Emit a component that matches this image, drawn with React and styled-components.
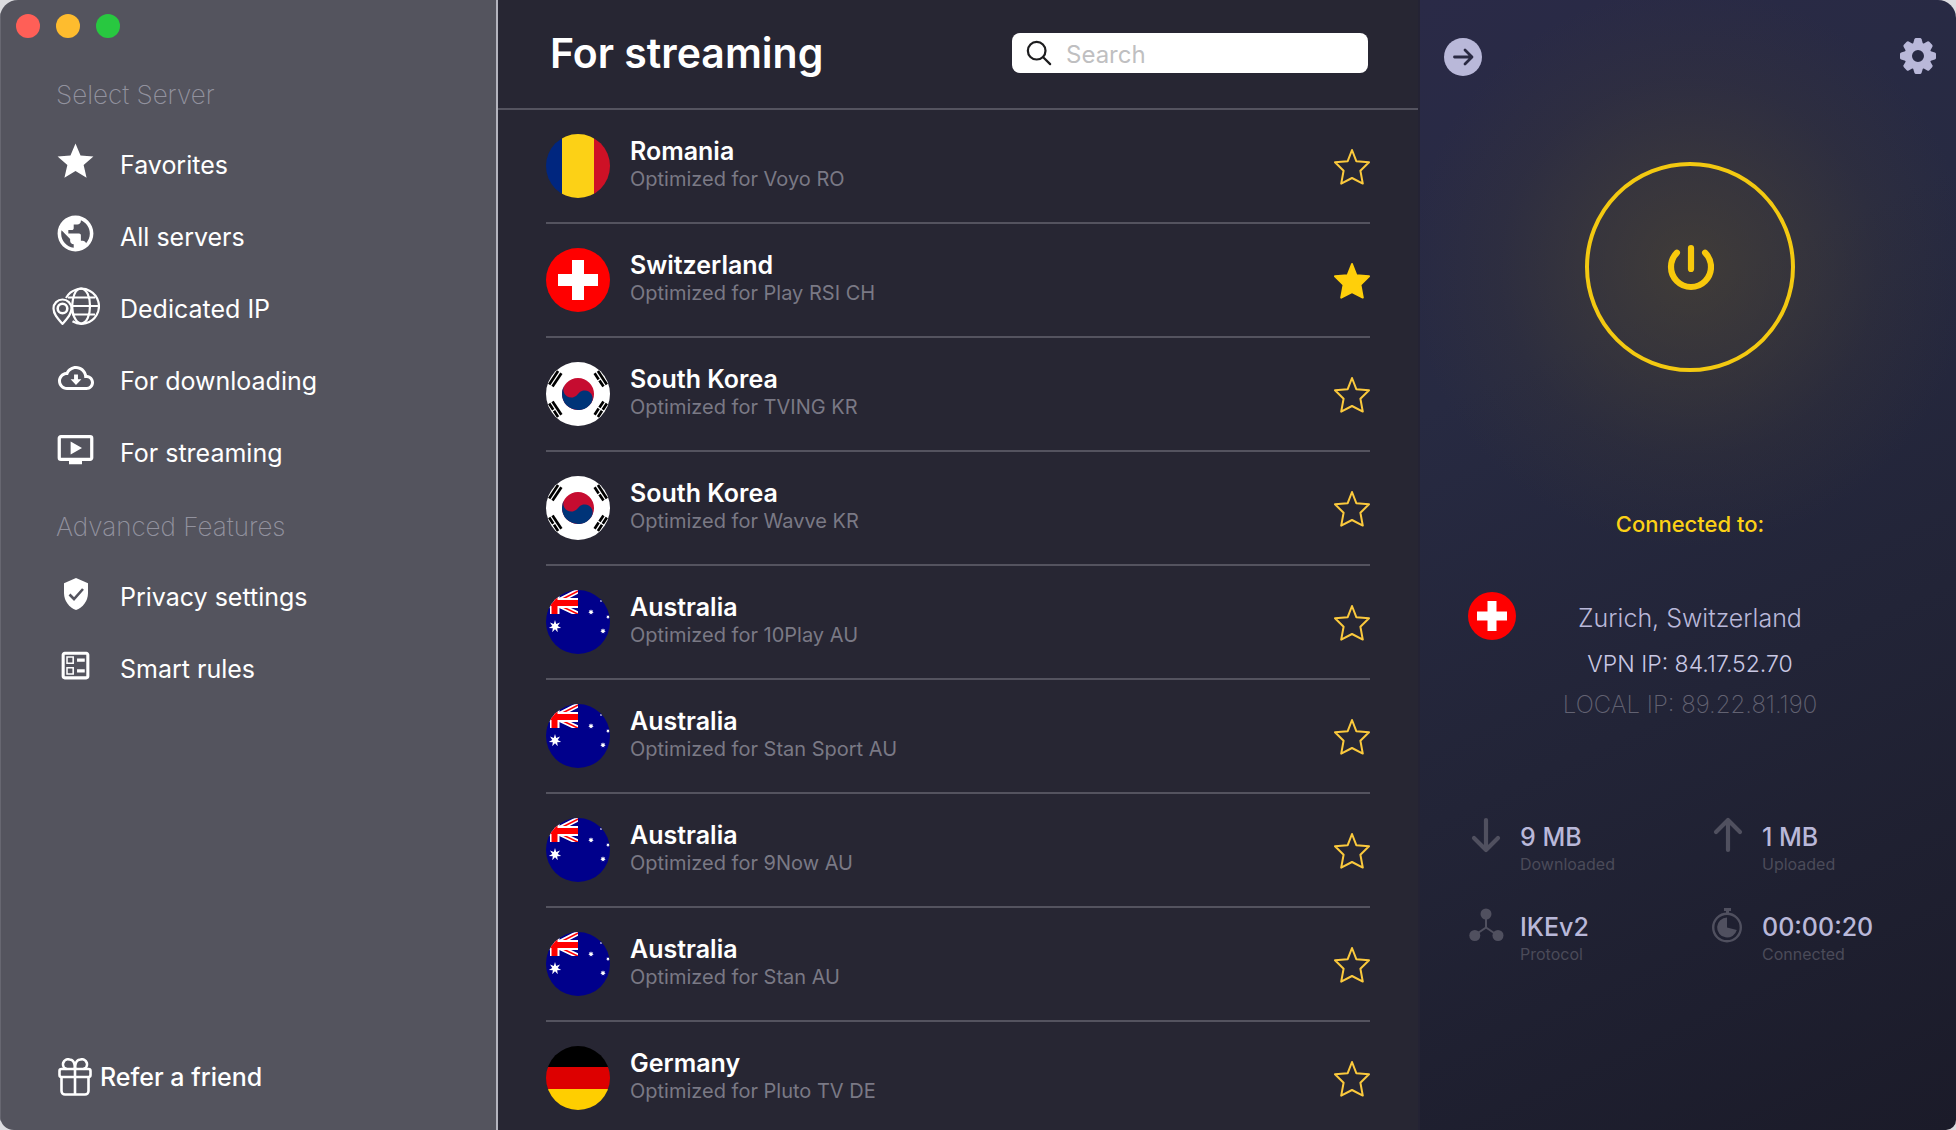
import React, { useState } from 'react';
import styled, { createGlobalStyle } from 'styled-components';
import {
  MdOndemandVideo,
  MdOutlineBallot,
  MdPublic,
  MdStar,
} from 'react-icons/md';

// START = ICONS
const ICDedicated = () => (
  <svg width="48" height="38" viewBox="0 0 48 38" fill="none" stroke="#fff" strokeWidth="2.200">
    <path d="M14 11a17.500 17.500 0 1 1 6.500 23.300" />
    <path d="M22 29.500C18.500 20 20.500 2 29 1.500C35 2 38 10 38 19S35 36 29 36.500C26.500 36.300 24 34 22 29.500" />
    <path d="M16 10.500h27M20.500 19h26M20 27.500h23" />
    <path d="M10.500 36.800C6 32 1.500 27.500 1.500 21.500a9 9 0 0 1 18 0C19.500 27.500 15 32 10.500 36.800z" />
    <circle cx="10.500" cy="21.500" r="4.800" strokeWidth="2.600" />
  </svg>
);

const ICCloud = () => (
  <svg width="36" height="36" viewBox="0 0 24 24" fill="#fff">
    <path d="M19.350 10.040C18.670 6.590 15.640 4 12 4 9.110 4 6.600 5.640 5.350 8.040 2.340 8.360 0 10.910 0 14c0 3.310 2.690 6 6 6h13c2.760 0 5-2.240 5-5 0-2.640-2.050-4.780-4.650-4.960zM19 18H6c-2.210 0-4-1.790-4-4s1.790-4 4-4h.71C7.370 7.690 9.480 6 12 6c3.040 0 5.500 2.460 5.500 5.500v.5H19c1.660 0 3 1.340 3 3s-1.340 3-3 3z" />
    <path d="M10.700 9.600h2.600v3.200h2.300L12 16.600l-3.600-3.800h2.300z" />
  </svg>
);

const ICShield = () => (
  <svg width="26" height="34" viewBox="0 0 26 34">
    <path d="M13 1L25 6.300V16c0 8-5.200 14.500-12 17C6.200 30.500 1 24 1 16V6.300z" fill="#fff" />
    <path d="M6.500 17.500l4.500 4.500L20 12" fill="none" stroke="#54545e" strokeWidth="2.600" />
  </svg>
);

const ICGift = () => (
  <svg width="34" height="38" viewBox="0 0 34 38" fill="none" stroke="#fff" strokeWidth="2.600">
    <rect x="1.500" y="11" width="31" height="8" rx="2" />
    <path d="M3.500 19v14a3.500 3.500 0 0 0 3.500 3.500h20a3.500 3.500 0 0 0 3.500-3.500V19M17 9v27" />
    <path d="M17 11C17 5 15 1.500 11.500 1.500a4.800 4.800 0 0 0-3 9.500M17 11C17 5 19 1.500 22.500 1.500a4.800 4.800 0 0 1 3 9.500" />
  </svg>
);

const ICSearch = () => (
  <svg width="26" height="26" viewBox="0 0 28 28" fill="none" stroke="#1d1d1f" strokeWidth="2.400" strokeLinecap="round">
    <circle cx="11.500" cy="11.500" r="9.500" />
    <path d="M18.500 18.500l7.500 7.500" />
  </svg>
);

const ICStar = ({ filled }) => (
  <svg width="36" height="38" viewBox="0 0 36 38">
    <path
      d="M18 2L22.300 13.200L35 14.300L26.400 22.800L28.800 35.600L18 30L7.200 35.600L9.600 22.800L1 14.300L13.700 13.200Z"
      fill={filled ? '#ffcf0a' : 'none'}
      stroke={filled ? '#ffcf0a' : '#fbc93d'}
      strokeWidth="2"
      strokeLinejoin="round"
    />
  </svg>
);

const ICForward = () => (
  <svg width="38" height="38" viewBox="0 0 38 38">
    <circle cx="19" cy="19" r="19" fill="#b9b8d9" />
    <path d="M10.500 19h17M21 12l7 7-7 7" fill="none" stroke="#2a2a43" strokeWidth="2.800" strokeLinecap="round" strokeLinejoin="round" />
  </svg>
);

const ICGear = () => (
  <svg width="36" height="36" viewBox="-18 -18 36 36" fill="#b9b8d9">
    <path d="M0-13.500a13.500 13.500 0 1 0 0 27a13.500 13.500 0 1 0 0-27zM0-6a6 6 0 1 1 0 12a6 6 0 1 1 0-12z" fillRule="evenodd" />
    {[0, 45, 90, 135, 180, 225, 270, 315].map((angle) => (
      <path key={angle} d="M-5-12L-3.600-16.800Q-3.200-18-2-18H2Q3.200-18 3.600-16.800L5-12z" transform={`rotate(${angle})`} />
    ))}
  </svg>
);

const ICPower = () => (
  <svg width="48" height="48" viewBox="0 0 48 48" fill="none" stroke="#f8c90c" strokeWidth="6.200" strokeLinecap="round">
    <path d="M10.900 9.800a20 20 0 1 0 28.200 0" />
    <path d="M25 5v21" />
  </svg>
);

const ICArrow = ({ up }) => (
  <svg width="36" height="36" viewBox="0 0 36 36" fill="none" stroke="#50505f" strokeWidth="4.200" strokeLinecap="round" strokeLinejoin="round">
    <path d={up ? 'M18 33V3M6 15L18 3l12 12' : 'M18 3v30M6 21l12 12 12-12'} />
  </svg>
);

const ICNetwork = () => (
  <svg width="36" height="36" viewBox="0 0 36 36" fill="#50505f">
    <path d="M18 7v13.500L7 28M18 20.500L29 28" fill="none" stroke="#50505f" strokeWidth="2" />
    <circle cx="18" cy="7" r="5.500" />
    <circle cx="6.800" cy="28.500" r="5.500" />
    <circle cx="30" cy="28.500" r="5.500" />
  </svg>
);

const ICTimer = () => (
  <svg width="36" height="36" viewBox="0 0 36 36" fill="#50505f">
    <circle cx="17" cy="20.500" r="13.800" fill="none" stroke="#50505f" strokeWidth="2.400" />
    <path d="M17 20.500V10.500A10 10 0 1 0 26.800 23z" />
    <path d="M14 1h7v3h-2v3h-3V4h-2z" />
  </svg>
);
// END = ICONS

// START = FLAGS
const starPoints = (cx, cy, outer, inner, tips) => {
  const points = [];
  for (let i = 0; i < tips * 2; i += 1) {
    const r = i % 2 === 0 ? outer : inner;
    const a = (Math.PI * i) / tips - Math.PI / 2;
    points.push(`${(cx + r * Math.cos(a)).toFixed(2)},${(cy + r * Math.sin(a)).toFixed(2)}`);
  }
  return points.join(' ');
};

// three bars of a trigram, "1" is a whole bar and "0" a broken one
const Trigram = ({ bars, angle, side }) => (
  <g transform={`rotate(${angle} 32 32) translate(32 32)`}>
    {bars.split('').map((bar, i) => {
      const x = side * (25.3 + i * 4);
      return (
        <path
          key={x}
          d={bar === '1' ? `M${x} -8V8` : `M${x} -8V-.7M${x} .7V8`}
          stroke="#000"
          strokeWidth="2.700"
        />
      );
    })}
  </g>
);

const flagArt = {
  RO: (
    <>
      <rect width="16" height="64" fill="#00267f" />
      <rect x="16" width="32" height="64" fill="#fcd116" />
      <rect x="48" width="16" height="64" fill="#ce1126" />
    </>
  ),
  CH: (
    <>
      <rect width="64" height="64" fill="#f00" />
      <path d="M26 12h12v14h14v12H38v14H26V38H12V26h14z" fill="#fff" />
    </>
  ),
  KR: (
    <>
      <rect width="64" height="64" fill="#fff" />
      <circle cx="32" cy="32" r="16" fill="#c60c30" />
      <path d="M16 32a8 8 0 0 0 16 0a8 8 0 0 1 16 0a16 16 0 0 1-32 0z" fill="#003478" transform="rotate(33.700 32 32)" />
      <Trigram bars="111" angle={33.7} side={-1} />
      <Trigram bars="000" angle={33.7} side={1} />
      <Trigram bars="010" angle={-33.7} side={1} />
      <Trigram bars="101" angle={-33.7} side={-1} />
    </>
  ),
  AU: (
    <>
      <rect width="64" height="64" fill="#00008b" />
      <svg x="0" y="0" width="32" height="24" viewBox="0 0 32 24">
        <path d="M8.500 13L36-1M8.500 13L36 26" stroke="#fff" strokeWidth="5" />
        <path d="M8.500 13L36-1M8.500 13L36 26" stroke="#f00" strokeWidth="1.600" />
        <path d="M8.500 0v24M0 13h32" stroke="#fff" strokeWidth="10" />
        <path d="M8.500 0v24M0 13h32" stroke="#f00" strokeWidth="6" />
        <path d="M0 0h4v24H0z" fill="#00008b" />
      </svg>
      <polygon points={starPoints(9, 36.5, 6.4, 2.8, 7)} fill="#fff" />
      <polygon points={starPoints(45, 22, 2.8, 1.5, 7)} fill="#fff" />
      <polygon points={starPoints(62, 27, 2, 1, 7)} fill="#fff" />
      <polygon points={starPoints(57, 41, 2.8, 1.5, 7)} fill="#fff" />
      <polygon points={starPoints(55, 11, 1.2, 0.6, 7)} fill="#fff" />
    </>
  ),
  DE: (
    <>
      <rect width="64" height="22" fill="#000" />
      <rect y="21" width="64" height="22" fill="#d00" />
      <rect y="43" width="64" height="21" fill="#ffce00" />
    </>
  ),
};

const Flag = ({ code, size = 64 }) => (
  <StyleFlag width={size} height={size} viewBox="0 0 64 64" aria-hidden="true">
    {flagArt[code]}
  </StyleFlag>
);
// END = FLAGS

const serverMenu = [
  { label: 'Favorites', icon: <MdStar size={43} /> },
  { label: 'All servers', icon: <MdPublic size={43} /> },
  { label: 'Dedicated IP', icon: <ICDedicated /> },
  { label: 'For downloading', icon: <ICCloud /> },
  { label: 'For streaming', icon: <MdOndemandVideo size={39} /> },
];

const advancedMenu = [
  { label: 'Privacy settings', icon: <ICShield /> },
  { label: 'Smart rules', icon: <MdOutlineBallot size={37} /> },
];

const servers = [
  { code: 'RO', name: 'Romania', service: 'Voyo RO' },
  { code: 'CH', name: 'Switzerland', service: 'Play RSI CH' },
  { code: 'KR', name: 'South Korea', service: 'TVING KR' },
  { code: 'KR', name: 'South Korea', service: 'Wavve KR' },
  { code: 'AU', name: 'Australia', service: '10Play AU' },
  { code: 'AU', name: 'Australia', service: 'Stan Sport AU' },
  { code: 'AU', name: 'Australia', service: '9Now AU' },
  { code: 'AU', name: 'Australia', service: 'Stan AU' },
  { code: 'DE', name: 'Germany', service: 'Pluto TV DE' },
];

const stats = [
  { value: '9 MB', label: 'Downloaded', icon: <ICArrow /> },
  { value: '1 MB', label: 'Uploaded', icon: <ICArrow up /> },
  { value: 'IKEv2', label: 'Protocol', icon: <ICNetwork /> },
  { value: '00:00:20', label: 'Connected', icon: <ICTimer /> },
];

const Menu = ({ title, items }) => (
  <nav aria-label={title}>
    <MenuTitle>{title}</MenuTitle>
    {items.map((item) => (
      <MenuItem key={item.label} type="button">
        <MenuIcon>{item.icon}</MenuIcon>
        {item.label}
      </MenuItem>
    ))}
  </nav>
);

const Sidebar = () => (
  <StyleSidebar>
    <WindowControls>
      <WindowDot $color="#ff5f57" aria-label="Close" />
      <WindowDot $color="#febc2e" aria-label="Minimize" />
      <WindowDot $color="#28c840" aria-label="Zoom" />
    </WindowControls>
    <Menu title="Select Server" items={serverMenu} />
    <Menu title="Advanced Features" items={advancedMenu} />
    <Refer type="button">
      <ICGift />
      Refer a friend
    </Refer>
  </StyleSidebar>
);

const ServerRow = ({ server }) => {
  const [favorite, setFavorite] = useState(server.code === 'CH');
  return (
    <StyleServerRow>
      <Flag code={server.code} />
      <div className="info">
        <p className="name">{server.name}</p>
        <p className="service">Optimized for {server.service}</p>
      </div>
      <StarButton
        type="button"
        aria-label={`Favorite ${server.name}, ${server.service}`}
        aria-pressed={favorite}
        onClick={() => setFavorite(!favorite)}
      >
        <ICStar filled={favorite} />
      </StarButton>
    </StyleServerRow>
  );
};

const ServerList = () => (
  <StyleServerList>
    <header>
      <h1>For streaming</h1>
      <SearchBox>
        <ICSearch />
        <input type="search" placeholder="Search" aria-label="Search" />
      </SearchBox>
    </header>
    <ul>
      {servers.map((server) => (
        <ServerRow key={server.service} server={server} />
      ))}
    </ul>
  </StyleServerList>
);

const StatusPanel = () => (
  <StyleStatusPanel>
    <div className="toolbar">
      <IconButton type="button" aria-label="Hide server list">
        <ICForward />
      </IconButton>
      <IconButton type="button" aria-label="Preferences">
        <ICGear />
      </IconButton>
    </div>
    <PowerButton type="button" aria-label="Disconnect">
      <ICPower />
    </PowerButton>
    <h2>Connected to:</h2>
    <Location>
      <Flag code="CH" size={48} />
      <div>
        <p className="city">Zurich, Switzerland</p>
        <p className="vpn">VPN IP: 84.17.52.70</p>
        <p className="local">LOCAL IP: 89.22.81.190</p>
      </div>
    </Location>
    <Stats>
      {stats.map((stat) => (
        <Stat key={stat.label}>
          {stat.icon}
          <div>
            <dd>{stat.value}</dd>
            <dt>{stat.label}</dt>
          </div>
        </Stat>
      ))}
    </Stats>
  </StyleStatusPanel>
);

const App = () => (
  <>
    <GlobalStyle />
    <StyleWindow>
      <Sidebar />
      <ServerList />
      <StatusPanel />
    </StyleWindow>
  </>
);

// START = STYLING
const GlobalStyle = createGlobalStyle`
  * {
    box-sizing: border-box;
    margin: 0;
    padding: 0;
  }
  body {
    background: #dcdce0;
    font-family: Inter, "Liberation Sans", sans-serif;
  }
  button {
    border: 0;
    background: none;
    color: inherit;
    font: inherit;
    cursor: pointer;
  }
  svg {
    flex-shrink: 0;
    display: block;
  }
`;

const StyleWindow = styled.div`
  display: grid;
  grid-template-columns: 498px minmax(0, 1fr) 536px;
  height: 100vh;
  border-radius: 18px 18px 10px 14px;
  overflow: hidden;
  color: #fff;
`;

const StyleFlag = styled.svg`
  border-radius: 50%;
`;

const IconButton = styled.button`
  display: flex;
`;

const StarButton = styled(IconButton)`
  padding-top: 2px;
`;

const StyleSidebar = styled.aside`
  display: flex;
  flex-direction: column;
  background: #54545e;
  border-left: 1px solid #676771;
  border-right: 2px solid #b4b4be;
`;

const WindowControls = styled.div`
  display: flex;
  gap: 16px;
  padding: 14px 15px 19px;
`;

const WindowDot = styled.button`
  width: 24px;
  height: 24px;
  border-radius: 50%;
  background: ${(props) => props.$color};
`;

const MenuTitle = styled.h2`
  height: 72px;
  padding: 4px 0 0 55px;
  font-size: 26px;
  font-weight: 200;
  line-height: 68px;
  color: #92929e;
`;

const MenuItem = styled.button`
  display: flex;
  align-items: center;
  width: 100%;
  height: 72px;
  padding-left: 47px;
  gap: 16px;
  font-size: 25px;
  text-align: left;
`;

const MenuIcon = styled.span`
  display: flex;
  justify-content: center;
  width: 56px;
  padding: 0 1px 7px 0;
`;

const Refer = styled.button`
  display: flex;
  align-items: center;
  gap: 8px;
  margin-top: auto;
  padding: 0 57px 34px;
  font-size: 25px;
  font-weight: 500;
`;

const StyleServerList = styled.main`
  display: flex;
  flex-direction: column;
  min-height: 0;
  background: #272633;
  border-right: 2px solid #242334;
  header {
    display: flex;
    flex-shrink: 0;
    align-items: center;
    justify-content: space-between;
    height: 110px;
    padding: 0 50px 2px 52px;
    border-bottom: 2px solid #54535f;
  }
  h1 {
    font-size: 41px;
    font-weight: 600;
  }
  ul {
    flex: 1;
    padding: 0 48px;
    overflow-y: auto;
    scrollbar-width: none;
    list-style: none;
  }
`;

const SearchBox = styled.label`
  display: flex;
  align-items: center;
  gap: 14px;
  width: 356px;
  height: 40px;
  padding: 0 14px;
  border-radius: 8px;
  background: #fff;
  input {
    flex: 1;
    min-width: 0;
    padding-top: 2px;
    border: 0;
    outline: 0;
    background: none;
    color: #1d1d1f;
    font: inherit;
    font-size: 24px;
  }
  input::placeholder {
    color: #bfbfc1;
  }
`;

const StyleServerRow = styled.li`
  display: flex;
  align-items: center;
  gap: 20px;
  height: 114px;
  border-bottom: 2px solid #54535f;
  .info {
    flex: 1;
    padding-bottom: 4px;
  }
  .name {
    font-size: 25px;
    font-weight: 600;
    line-height: 30px;
  }
  .service {
    font-size: 20px;
    line-height: 26px;
    color: #7a7985;
  }
`;

const StyleStatusPanel = styled.section`
  display: flex;
  flex-direction: column;
  align-items: center;
  padding: 38px 20px 0 24px;
  background:
    radial-gradient(circle at 270px 267px, rgba(84, 74, 48, 0.55) 0, rgba(76, 68, 52, 0.42) 100px, rgba(70, 62, 50, 0.18) 190px, rgba(70, 62, 50, 0) 280px),
    linear-gradient(155deg, #2a2a47 0%, #272a42 30%, #222437 60%, #1b1b29 100%);
  .toolbar {
    display: flex;
    justify-content: space-between;
    align-self: stretch;
    height: 38px;
  }
  h2 {
    margin-top: 138px;
    font-size: 22px;
    font-weight: 500;
    line-height: 28px;
    color: #fcd116;
  }
`;

const PowerButton = styled.button`
  display: flex;
  align-items: center;
  justify-content: center;
  width: 210px;
  height: 210px;
  margin-top: 86px;
  border: 4px solid #f3c911;
  border-radius: 50%;
`;

const Location = styled.div`
  display: grid;
  grid-template-columns: 48px 1fr 48px;
  align-self: stretch;
  margin-top: 54px;
  padding: 0 24px;
  text-align: center;
  font-weight: 300;
  .city {
    font-size: 25px;
    line-height: 52px;
    color: #b9b8d9;
  }
  .vpn {
    font-size: 23px;
    line-height: 40px;
    color: #c9c8e4;
  }
  .local {
    font-size: 24px;
    font-weight: 200;
    line-height: 42px;
    color: #626272;
  }
`;

const Stats = styled.dl`
  display: grid;
  grid-template-columns: 1fr 1fr;
  align-self: stretch;
  gap: 32px 16px;
  margin-top: 91px;
  padding-left: 24px;
`;

const Stat = styled.div`
  display: flex;
  gap: 16px;
  div {
    display: flex;
    flex-direction: column;
    padding-top: 5px;
  }
  dd {
    font-size: 25px;
    font-weight: 500;
    line-height: 30px;
    color: #b9b8d9;
  }
  dt {
    padding-top: 1px;
    font-size: 16px;
    line-height: 22px;
    color: #4b4b59;
  }
`;
// END = STYLING

export default App;
